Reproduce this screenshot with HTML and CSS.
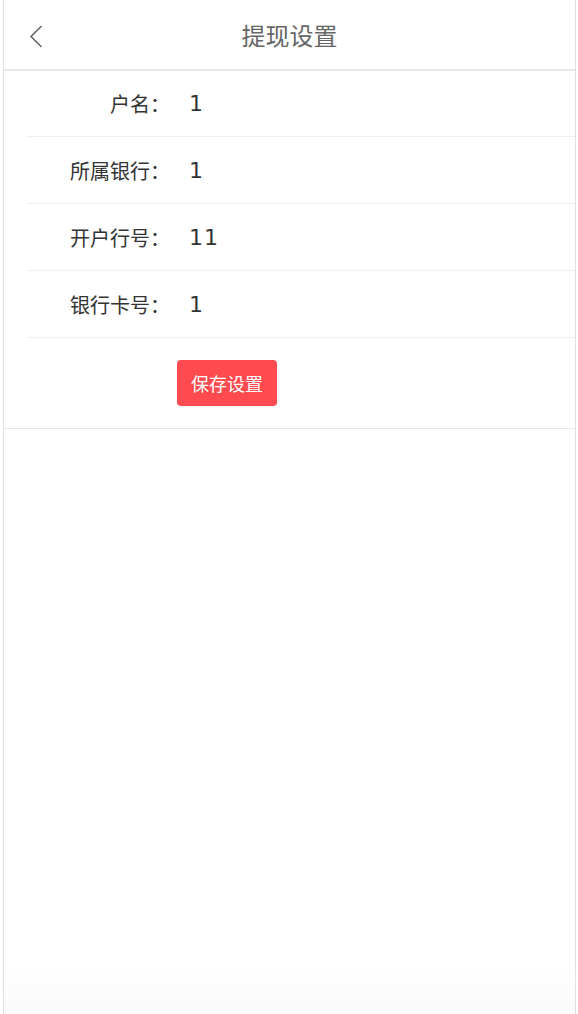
FILE: index.html
```html
<!doctype html>
<html lang="zh-CN">
  <head>
    <meta charset="UTF-8" />
    <meta name="viewport" content="width=device-width, initial-scale=1.0" />
    <title>提现设置</title>
    <link rel="stylesheet" href="styles.css">
  </head>

  <body>
    <div class="page">
      <div class="header">
        <a class="back" href="#">
          <svg width="14" height="23" viewBox="0 0 14 23">
            <polyline points="12.5,1 2,11.5 12.5,22" fill="none" stroke="#666" stroke-width="1.6" />
          </svg>
        </a>
        <div class="title">提现设置</div>
      </div>

      <div class="form">
        <div class="form-item">
          <span class="form-label">户名：</span>
          <span class="form-value">1</span>
        </div>
        <div class="form-item">
          <span class="form-label">所属银行：</span>
          <span class="form-value">1</span>
        </div>
        <div class="form-item">
          <span class="form-label">开户行号：</span>
          <span class="form-value">11</span>
        </div>
        <div class="form-item">
          <span class="form-label">银行卡号：</span>
          <span class="form-value">1</span>
        </div>
        <div class="form-btns">
          <button class="save">保存设置</button>
        </div>
      </div>
    </div>
  </body>
</html>
```

FILE: styles.css
```css
html,
body {
  margin: 0;
  padding: 0;
  background-color: #fff;
}
body {
  font-family: "DejaVu Sans", "Noto Sans CJK SC", sans-serif;
  color: #333;
}

.page {
  margin: 0 2px 0 3px;
  min-height: 1014px;
  border-left: 1px solid #e0e0e0;
  border-right: 1px solid #e0e0e0;
  background: linear-gradient(#fff calc(100% - 50px), #fafafa);
}

.header {
  position: relative;
  height: 71px;
  padding-bottom: 1px;
  box-sizing: border-box;
  border-bottom: 2px solid #e8e8e8;
  display: flex;
  justify-content: center;
  align-items: center;
}
.back {
  position: absolute;
  left: 25px;
  top: 25px;
  display: block;
  line-height: 0;
}
.title {
  font-family: "Noto Sans CJK SC", sans-serif;
  font-size: 24px;
  color: #666;
}

.form-item {
  display: flex;
  align-items: center;
  height: 65px;
  margin-left: 22px;
  border-bottom: 1px solid #efefef;
  font-size: 20px;
}
.form-item + .form-item {
  height: 66px;
}
.form-label {
  width: 144px;
  text-align: right;
  font-family: "Noto Sans CJK SC", sans-serif;
  color: #333;
}
.form-value {
  margin-left: 19px;
  font-size: 22px;
  letter-spacing: 1px;
  color: #333;
}

.form-btns {
  padding: 22px 0 22px 173px;
  border-bottom: 1px solid #e8e8e8;
}
.save {
  display: block;
  width: 100px;
  height: 46px;
  border: none;
  border-radius: 4px;
  background-color: #ff4a4f;
  color: #fff;
  font-family: "Noto Sans CJK SC", sans-serif;
  font-size: 18px;
  padding: 0;
}
```
